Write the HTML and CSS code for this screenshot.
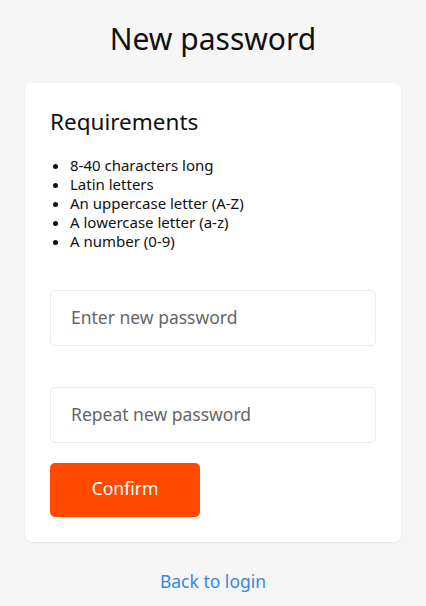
FILE: index.html
```html
<!DOCTYPE html>
<html lang="en">
<head>
<meta charset="utf-8">
<title>New password</title>
<link rel="stylesheet" href="styles.css">
</head>
<body>
<main class="page">
  <h1 class="title">New password</h1>
  <section class="card">
    <h2 class="req-title">Requirements</h2>
    <ul class="req-list">
      <li>8-40 characters long</li>
      <li>Latin letters</li>
      <li>An uppercase letter (A-Z)</li>
      <li>A lowercase letter (a-z)</li>
      <li>A number (0-9)</li>
    </ul>
    <form class="form">
      <input class="field" type="password" placeholder="Enter new password">
      <input class="field" type="password" placeholder="Repeat new password">
      <button class="btn" type="button">Confirm</button>
    </form>
  </section>
  <a class="back" href="#">Back to login</a>
</main>
</body>
</html>
```

FILE: styles.css
```css
* { box-sizing: border-box; }
html, body { margin: 0; padding: 0; }
body {
  background: #f6f6f6;
  font-family: "Noto Sans", "Open Sans", sans-serif;
  color: #111;
}
.page {
  display: flex;
  flex-direction: column;
  align-items: center;
  padding: 18px 25px 0;
}
.title {
  margin: 0;
  font-size: 30px;
  font-weight: 400;
  line-height: 41px;
  color: #111;
}
.card {
  align-self: stretch;
  margin-top: 24px;
  background: #fff;
  border-radius: 7px;
  box-shadow: 0 1px 2px rgba(0,0,0,0.08);
  padding: 24px 25px 25px;
}
.req-title {
  margin: 0;
  font-size: 22.5px;
  font-weight: 400;
  line-height: 30px;
  color: #111;
}
.req-list {
  margin: 19px 0 0;
  padding-left: 20px;
  font-size: 15px;
  line-height: 19px;
  color: #111;
}
.form {
  display: flex;
  flex-direction: column;
  align-items: flex-start;
  margin-top: 39px;
}
.field {
  width: 100%;
  height: 56px;
  border: 1px solid #ebebeb;
  border-radius: 5px;
  padding: 0 20px 2px;
  font-family: inherit;
  font-size: 17.5px;
  color: #333;
  background: #fff;
  outline: none;
}
.field::placeholder { color: #666; }
.field + .field { margin-top: 41px; }
.btn {
  margin-top: 20px;
  width: 150px;
  height: 54px;
  border: 0;
  border-radius: 5px;
  padding: 0 0 4px;
  background: #ff4a00;
  color: #fff;
  font-family: inherit;
  font-size: 17.5px;
  cursor: pointer;
}
.back {
  margin-top: 25px;
  font-size: 17.5px;
  line-height: 28px;
  color: #3a87e0;
  text-decoration: none;
}
```
